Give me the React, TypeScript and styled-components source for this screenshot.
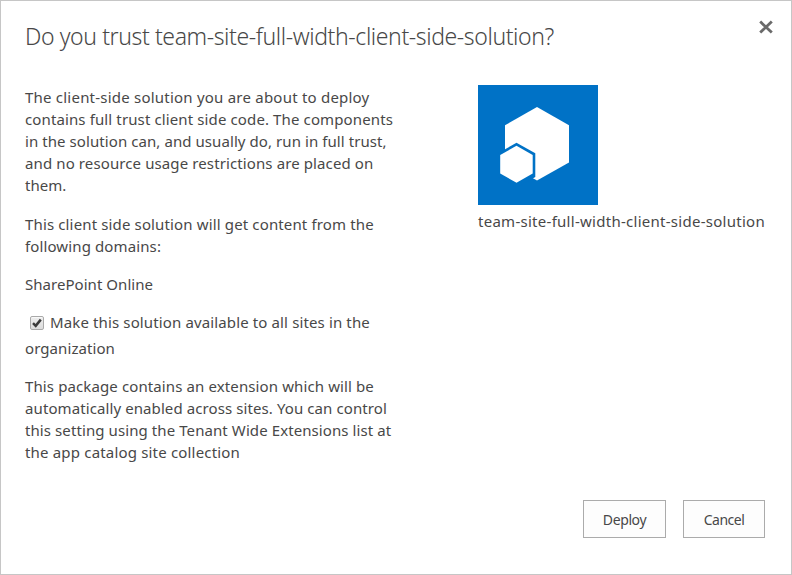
import React, { useState } from 'react';
import styled, { createGlobalStyle } from 'styled-components';

const GlobalStyle = createGlobalStyle`
  body {
    margin: 0;
    background: #fff;
  }
`;

const Dialog = styled.section`
  box-sizing: border-box;
  width: 792px;
  height: 575px;
  padding: 19px 26px 36px 24px;
  border: 1px solid #c6c6c6;
  display: flex;
  flex-direction: column;
  background: #fff;
  color: #484848;
  font-family: 'Noto Sans', 'Open Sans', sans-serif;
  font-size: 15px;
  line-height: 22px;
`;

const Header = styled.header`
  display: flex;
  justify-content: space-between;
  align-items: flex-start;
  height: 65px;
`;

const Title = styled.h1`
  margin: 0;
  font-size: 23px;
  font-weight: 300;
  line-height: 32px;
  letter-spacing: -0.4px;
  white-space: nowrap;
  color: #484848;
`;

const CloseButton = styled.button`
  display: flex;
  margin: 0 -9px 0 0;
  padding: 0;
  border: 0;
  background: none;
  cursor: pointer;
`;

const Body = styled.div`
  display: grid;
  grid-template-columns: 453px 1fr;
  flex: 1;
`;

const Message = styled.div`
  padding-top: 1px;
`;

const Paragraph = styled.p<{ $gap: number }>`
  margin: 0 0 ${({ $gap }) => $gap}px;
`;

const Line = styled.span<{ $tracking: number }>`
  display: block;
  white-space: nowrap;
  letter-spacing: ${({ $tracking }) => $tracking}px;
`;

const Option = styled.label`
  display: block;
  margin-bottom: 14px;
  line-height: 26px;
`;

const OptionRow = styled.span`
  display: flex;
  align-items: center;
  padding-left: 5px;
  gap: 6px;
`;

const HiddenInput = styled.input`
  appearance: none;
  width: 0;
  height: 0;
  margin: 0 -6px 0 0;
`;

const CheckBox = styled.span`
  box-sizing: border-box;
  display: flex;
  width: 14px;
  height: 14px;
  margin-top: 2px;
  border: 1px solid #a9a9a9;
  border-radius: 2px;
  background: linear-gradient(#eee, #dcdcdc);
  box-shadow: inset 0 1px 0 #f8f8f8;
`;

const AppCard = styled.aside`
  display: flex;
  flex-direction: column;
  gap: 5px;
`;

const Actions = styled.footer`
  display: flex;
  justify-content: flex-end;
  gap: 17px;
`;

const ActionButton = styled.button<{ $width: number; $tracking: number }>`
  box-sizing: border-box;
  width: ${({ $width }) => $width}px;
  height: 38px;
  padding: 2px 0 0;
  border: 1px solid #ababab;
  background: #fdfdfd;
  color: #484848;
  font-family: inherit;
  font-size: 14px;
  line-height: 18px;
  letter-spacing: ${({ $tracking }) => $tracking}px;
`;

type TextLine = [text: string, tracking: number];

const trust: TextLine[] = [
  ['The client-side solution you are about to deploy', 0.22],
  ['contains full trust client side code. The components', 0.12],
  ['in the solution can, and usually do, run in full trust,', 0.075],
  ['and no resource usage restrictions are placed on', 0.11],
  ['them.', 0],
];
const domains: TextLine[] = [
  ['This client side solution will get content from the', 0.14],
  ['following domains:', 0.12],
];
const extension: TextLine[] = [
  ['This package contains an extension which will be', 0.115],
  ['automatically enabled across sites. You can control', 0.095],
  ['this setting using the Tenant Wide Extensions list at', 0.09],
  ['the app catalog site collection', 0.18],
];

function Text({ lines, gap }: { lines: TextLine[]; gap: number }) {
  return (
    <Paragraph $gap={gap}>
      {lines.map(([text, tracking]) => (
        <Line key={text} $tracking={tracking}>{text}</Line>
      ))}
    </Paragraph>
  );
}

export default function App() {
  const [checked, setChecked] = useState(true);
  return (
    <>
      <GlobalStyle />
      <Dialog role="dialog">
        <Header>
          <Title>Do you trust team-site-full-width-client-side-solution?</Title>
          <CloseButton aria-label="Close">
            <svg width="16" height="16" viewBox="0 0 16 16">
              <path d="M2.2 1.6 L13.8 12.6 M13.8 1.6 L2.2 12.6" stroke="#6a6a6a" strokeWidth="2.8" />
            </svg>
          </CloseButton>
        </Header>
        <Body>
          <Message>
            <Text lines={trust} gap={17} />
            <Text lines={domains} gap={16} />
            <Text lines={[['SharePoint Online', 0.04]]} gap={14} />
            <Option>
              <OptionRow>
                <HiddenInput
                  type="checkbox"
                  checked={checked}
                  onChange={(e) => setChecked(e.target.checked)}
                />
                <CheckBox>
                  {checked && (
                    <svg width="12" height="12" viewBox="0 0 12 12">
                      <path d="M2 6.2 L4.7 8.8 L9.8 2.6" fill="none" stroke="#3a3a3a" strokeWidth="2.5" />
                    </svg>
                  )}
                </CheckBox>
                <Line $tracking={0.13}>Make this solution available to all sites in the</Line>
              </OptionRow>
              <Line $tracking={0.08}>organization</Line>
            </Option>
            <Text lines={extension} gap={0} />
          </Message>
          <AppCard>
            <svg width="120" height="120" viewBox="0 0 120 120">
              <rect width="120" height="120" fill="#0072c6" />
              <path d="M59 22 L91 40.3 V77.5 L59 95.5 L27 77.5 V40.3 Z" fill="#fff" />
              <path d="M38.5 57.8 L57.3 68.3 V92 L38.5 102.8 L20 92 V68.3 Z" fill="#0072c6" />
              <path d="M38.5 60.8 L54.7 70 V88.5 L38.5 97.8 L22.2 88.5 V70 Z" fill="#fff" />
            </svg>
            <Line $tracking={0.273}>team-site-full-width-client-side-solution</Line>
          </AppCard>
        </Body>
        <Actions>
          <ActionButton $width={83} $tracking={-0.4}>Deploy</ActionButton>
          <ActionButton $width={82} $tracking={-0.5}>Cancel</ActionButton>
        </Actions>
      </Dialog>
    </>
  );
}
